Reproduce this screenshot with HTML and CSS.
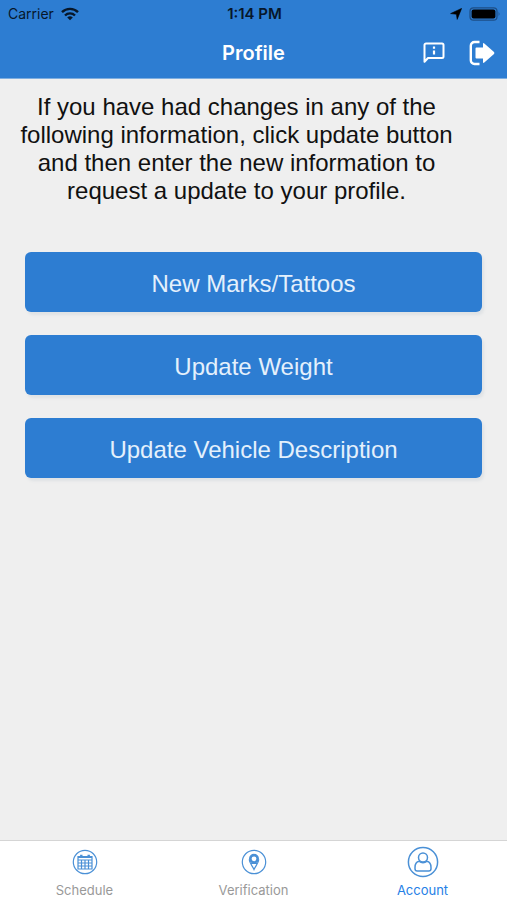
FILE: index.html
```html
<!DOCTYPE html>
<html lang="en">
<head>
<meta charset="utf-8">
<meta name="viewport" content="width=device-width, initial-scale=1">
<title>Profile</title>
<link rel="stylesheet" href="styles.css">
</head>
<body>
<header class="header">
  <div class="status">
    <div class="status-left">
      <span>Carrier</span>
      <svg width="18" height="14" viewBox="0 0 18 14" fill="none" stroke="currentColor" stroke-width="2.4" aria-hidden="true">
        <path d="M1 5.2a11.3 11.3 0 0 1 16 0M4 8.5a7 7 0 0 1 10 0"/>
        <path d="M9 13.2 6.2 10.6a4 4 0 0 1 5.6 0z" fill="currentColor" stroke="none"/>
      </svg>
    </div>
    <span class="time">1:14 PM</span>
    <div class="status-right">
      <svg width="12" height="12" viewBox="0 0 12 12" fill="currentColor" stroke="currentColor" stroke-width=".6" aria-hidden="true"><path d="M11.6.4 7.2 11.4 6.4 6.2.6 5.6z"/></svg>
      <svg width="32" height="14" viewBox="0 0 32 14" aria-hidden="true">
        <rect x="1" y=".8" width="27" height="12.4" rx="3.5" fill="none" stroke="#1d4e86" stroke-width="1.2"/>
        <rect x="2.6" y="2.4" width="23.8" height="9.2" rx="2" fill="#000"/>
        <path d="M29.6 4.6q1.8 2.2 0 4.6z" fill="#1d4e86"/>
      </svg>
    </div>
  </div>
  <div class="nav">
    <h1 class="title">Profile</h1>
    <div class="actions">
      <button class="icon-button" type="button" aria-label="Messages">
        <svg width="22" height="22" viewBox="0 0 22 22" fill="none" stroke="currentColor" stroke-width="2" stroke-linejoin="round" aria-hidden="true">
          <path d="M1.500 19.800V3a1.500 1.500 0 0 1 1.500-1.500h16A1.500 1.500 0 0 1 20.500 3v11.500a1.500 1.500 0 0 1-1.500 1.500H5z"/>
          <path d="M11 4.600v2.200M11 8.400v4.200" stroke-width="2.200"/>
        </svg>
      </button>
      <button class="icon-button" type="button" aria-label="Sign out">
        <svg width="26" height="26" viewBox="0 0 26 26" aria-hidden="true">
          <path d="M10.500 2H5.500A3.700 3.700 0 0 0 1.800 5.700v14.600A3.700 3.700 0 0 0 5.500 24h5" fill="none" stroke="currentColor" stroke-width="2.400"/>
          <path d="M7.500 7.500h6.500V4Q14 2.200 15.300 3.400L25 12.100Q25.800 13 25 13.900L15.300 22.600Q14 23.800 14 22V18.500H7.500Q6.500 18.500 6.500 17.500V8.500Q6.500 7.500 7.500 7.500z" fill="currentColor"/>
        </svg>
      </button>
    </div>
  </div>
</header>
<main class="content">
  <p class="intro">If you have had changes in any of the following information, click update button and then enter the new information to request a update to your profile.</p>
  <div class="buttons">
    <button class="button" type="button">New Marks/Tattoos</button>
    <button class="button" type="button">Update Weight</button>
    <button class="button" type="button">Update Vehicle Description</button>
  </div>
</main>
<nav class="tabs">
  <a class="tab" href="#schedule">
    <svg width="26" height="26" viewBox="0 0 26 26" fill="none" stroke="currentColor" stroke-width="1.200" aria-hidden="true">
      <circle cx="13" cy="13" r="11.700"/>
      <path d="M6 7.500h14v12.500h-14zM6 11h14M6 14h14M6 17h14M9.500 10.500v9.500M13 10.500v9.500M16.500 10.500v9.500"/>
      <path d="M6 8.200h14" stroke-width="1.600"/>
      <path d="M9.300 5.800v3M16.700 5.800v3" stroke-width="2.400"/>
    </svg>
    <span>Schedule</span>
  </a>
  <a class="tab" href="#verification">
    <svg width="26" height="26" viewBox="0 0 26 26" fill="none" stroke="currentColor" stroke-width="1.200" aria-hidden="true">
      <circle cx="13" cy="13" r="11.700"/>
      <circle cx="13" cy="9.800" r="3.700" stroke-width="2.600"/>
      <path d="M8.200 10.500C8.600 14.500 11.200 16.500 13 20.500 14.800 16.500 17.400 14.500 17.800 10.500M10.200 14.500h5.600"/>
    </svg>
    <span>Verification</span>
  </a>
  <a class="tab tab-active" href="#account" aria-current="page">
    <svg width="32" height="32" viewBox="0 0 32 32" fill="none" stroke="currentColor" stroke-width="1.500" aria-hidden="true">
      <circle cx="16" cy="16" r="14.600"/>
      <circle cx="16" cy="11.400" r="4.500"/>
      <path d="M12.200 15.300C9.600 15.800 8 18 8 21.500v1.200q0 2.300 2.300 2.300h11.400q2.300 0 2.300-2.300v-1.200c0-3.500-1.600-5.700-4.200-6.200-2 1.900-5.600 1.900-7.600 0z"/>
    </svg>
    <span>Account</span>
  </a>
</nav>
</body>
</html>
```
FILE: styles.css
```css
* {
  box-sizing: border-box;
}

body {
  margin: 0;
  min-height: 100vh;
  display: flex;
  flex-direction: column;
  background: #efefef;
  color: #111;
  font-family: Inter, "Liberation Sans", sans-serif;
}

.header {
  background: #2d7dd2;
  border-bottom: 1px solid #7eaee0;
}

.status,
.nav {
  display: grid;
  grid-template-columns: 1fr auto 1fr;
  align-items: center;
}

.status {
  height: 27px;
  padding: 0 6px 0 8px;
  font-size: 14px;
  color: #07172a;
}

.status-left,
.status-right {
  display: flex;
  align-items: center;
  gap: 7px;
}

.status-right {
  justify-content: flex-end;
  color: #000;
}

.time {
  font-size: 15px;
  font-weight: 600;
}

.nav {
  height: 51px;
  padding: 0 12px;
  color: #fff;
}

.title {
  grid-column: 2;
  margin: 0;
  font-size: 20px;
  line-height: 24px;
  font-weight: 600;
}

.actions {
  display: flex;
  justify-content: flex-end;
  align-items: center;
  gap: 24px;
}

.icon-button {
  padding: 0;
  border: 0;
  background: none;
  color: inherit;
}

.icon-button svg,
.tab svg {
  display: block;
}

.content {
  flex: 1;
  padding: 14px 25px;
  font-family: "Liberation Sans", sans-serif;
}

.intro {
  margin: 0 24px 47px -10px;
  font-size: 24px;
  line-height: 28px;
  text-align: center;
}

.buttons {
  display: grid;
  gap: 23px;
}

.button {
  height: 60px;
  padding: 3px 6px 0;
  border: 0;
  border-radius: 6px;
  background: #2d7dd2;
  box-shadow: 2px 3px 3px #dfe2e5;
  color: #e4f0fc;
  font: 24px "Liberation Sans", sans-serif;
}

.tabs {
  display: grid;
  grid-template-columns: repeat(3, 1fr);
  height: 60px;
  border-top: 1px solid #d5d5d5;
  background: #fff;
}

.tab {
  display: grid;
  grid-template-rows: 41px 16px;
  place-items: center;
  align-content: start;
  color: #999;
  font-size: 13px;
  line-height: 16px;
  text-decoration: none;
}

.tab svg {
  color: #4a90d6;
}

.tab-active {
  color: #2580e6;
}
```
